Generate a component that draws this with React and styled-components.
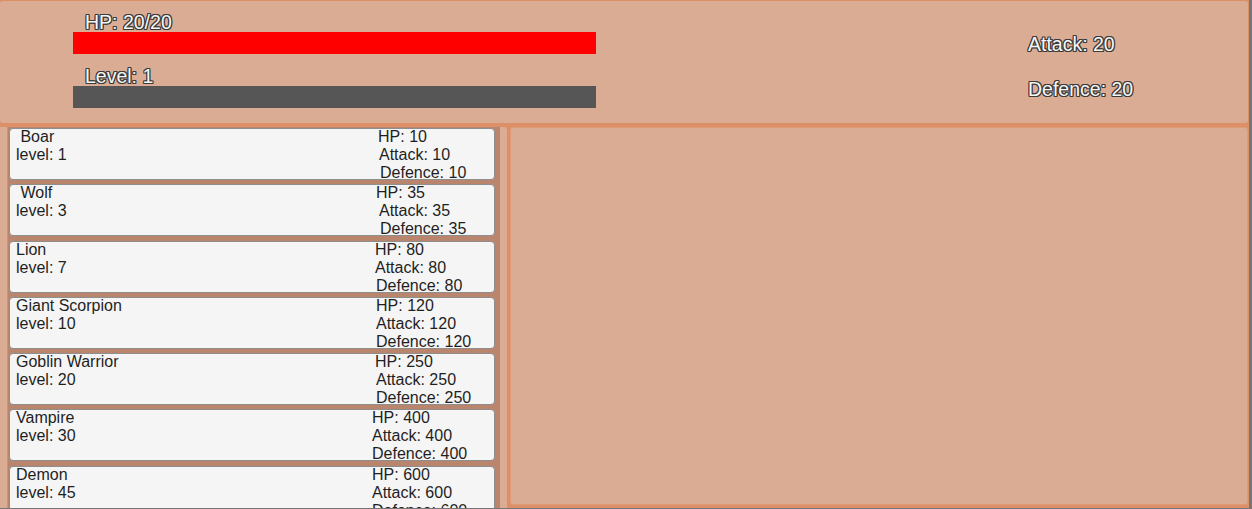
import React from 'react';
import styled, { createGlobalStyle } from 'styled-components';

const GlobalStyle = createGlobalStyle`
  html, body {
    margin: 0;
    padding: 0;
    background: #dd9068;
    overflow: hidden;
  }
  * { box-sizing: border-box; }
`;

const monsters = [
  { name: ' Boar', level: 1, hp: 10, attack: 10, defence: 10, indents: [14, 15, 16] },
  { name: ' Wolf', level: 3, hp: 35, attack: 35, defence: 35, indents: [12, 15, 16] },
  { name: 'Lion', level: 7, hp: 80, attack: 80, defence: 80, indents: [11, 11, 12] },
  { name: 'Giant Scorpion', level: 10, hp: 120, attack: 120, defence: 120, indents: [12, 12, 12] },
  { name: 'Goblin Warrior', level: 20, hp: 250, attack: 250, defence: 250, indents: [11, 12, 12] },
  { name: 'Vampire', level: 30, hp: 400, attack: 400, defence: 400, indents: [8, 8, 8] },
  { name: 'Demon', level: 45, hp: 600, attack: 600, defence: 600, indents: [8, 8, 8] },
];

const Screen = styled.div`
  width: 1252px;
  height: 509px;
  display: flex;
  flex-direction: column;
  padding: 1px 1px 0 0;
  background: #dd9068;
  border-right: 3px solid #767676;
  border-bottom: 1px solid #767676;
  font-family: 'Liberation Sans', Arial, sans-serif;
`;

const Panel = styled.div`
  background: #dbac94;
  border-radius: 3px;
`;

const TopPanel = styled(Panel)`
  flex: none;
  height: 122px;
  display: flex;
  padding: 11px 0 0 73px;
`;

const BarGroup = styled.div`
  width: 523px;
  display: flex;
  flex-direction: column;
  gap: 12px;
`;

const OutlinedText = styled.div`
  font-size: 19.5px;
  line-height: 20px;
  color: #f6f6f6;
  white-space: pre;
  text-shadow:
    1px 0 #3a3a3a, -1px 0 #3a3a3a, 0 1px #3a3a3a, 0 -1px #3a3a3a,
    1px 1px #3a3a3a, -1px -1px #3a3a3a, 1px -1px #3a3a3a, -1px 1px #3a3a3a;
`;

const BarLabel = styled(OutlinedText)`
  padding-left: 12px;
`;

const Bar = styled.div`
  height: 22px;
  background: ${(p) => p.$color};
`;

const PlayerStats = styled.div`
  margin-left: 432px;
  padding-top: 22px;
  display: flex;
  flex-direction: column;
  gap: 25px;
`;

const BottomRow = styled.div`
  flex: 1;
  min-height: 0;
  display: flex;
  gap: 3px;
  margin-top: 4px;
`;

const ListPanel = styled(Panel)`
  flex: none;
  width: 507px;
  border-radius: 0 3px 0 0;
  padding: 0 7px 0 7px;
  display: flex;
`;

const ScrollView = styled.div`
  width: 493px;
  height: 100%;
  overflow: hidden;
  background: #b9856d;
  border-left: 1px solid #d98f6b;
  padding: 1px 5px 0 1px;
  display: flex;
  flex-direction: column;
  gap: 4.3px;
`;

const Card = styled.div`
  flex: none;
  height: 52px;
  display: flex;
  background: #f5f5f5;
  border: 1px solid #8e8e8e;
  border-radius: 4px;
  color: #1f1f1f;
  font-size: 16px;
  line-height: 18px;
`;

const NameCol = styled.div`
  flex: 1;
  margin-top: -1px;
  padding-left: 6px;
  white-space: pre;
`;

const StatsCol = styled.div`
  flex: none;
  width: 130px;
  margin-top: -1px;
  white-space: pre;
`;

const StatLine = styled.div`
  padding-left: ${(p) => p.$indent}px;
`;

const DetailPanel = styled(Panel)`
  flex: 1;
  margin-bottom: 3px;
  border: 1px solid #e09a76;
`;

const MonsterCard = ({ m }) => (
  <Card>
    <NameCol>
      <div>{m.name}</div>
      <div>level: {m.level}</div>
    </NameCol>
    <StatsCol>
      <StatLine $indent={m.indents[0]}>HP: {m.hp}</StatLine>
      <StatLine $indent={m.indents[1]}>Attack: {m.attack}</StatLine>
      <StatLine $indent={m.indents[2]}>Defence: {m.defence}</StatLine>
    </StatsCol>
  </Card>
);

export default function App() {
  return (
    <>
      <GlobalStyle />
      <Screen>
        <TopPanel>
          <BarGroup>
            <div>
              <BarLabel>HP: 20/20</BarLabel>
              <Bar $color="#ff0000" />
            </div>
            <div>
              <BarLabel>Level: 1</BarLabel>
              <Bar $color="#565656" />
            </div>
          </BarGroup>
          <PlayerStats>
            <OutlinedText>Attack: 20</OutlinedText>
            <OutlinedText>Defence: 20</OutlinedText>
          </PlayerStats>
        </TopPanel>
        <BottomRow>
          <ListPanel>
            <ScrollView>
              {monsters.map((m) => (
                <MonsterCard key={m.name} m={m} />
              ))}
            </ScrollView>
          </ListPanel>
          <DetailPanel />
        </BottomRow>
      </Screen>
    </>
  );
}
